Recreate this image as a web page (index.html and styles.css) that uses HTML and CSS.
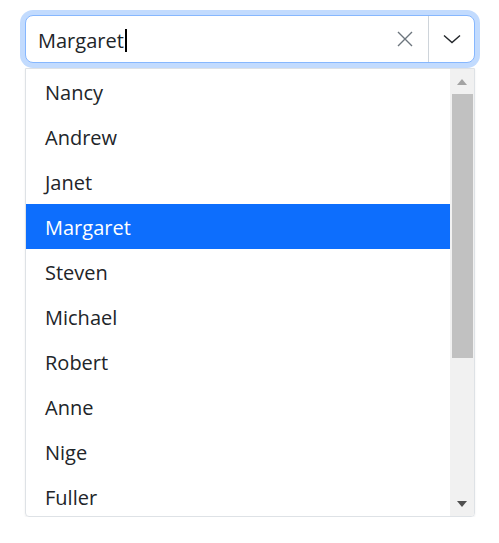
FILE: index.html
```html
<!DOCTYPE html>
<html>
<head>
<meta charset="utf-8">
<link rel="stylesheet" href="styles.css">
</head>
<body>
<div class="wrap">
  <div class="combo">
    <div class="field"><span class="value">Margaret</span><span class="caret"></span></div>
    <div class="clear">
      <svg width="16" height="16" viewBox="0 0 16 16"><path d="M1 1 L15 15 M15 1 L1 15" stroke="#6c757d" stroke-width="1.4" fill="none"/></svg>
    </div>
    <div class="toggle">
      <svg width="18" height="10" viewBox="0 0 18 10"><path d="M1 1.5 L9 8.5 L17 1.5" stroke="#212529" stroke-width="1.4" fill="none"/></svg>
    </div>
  </div>
  <div class="popup">
    <ul class="items">
      <li class="item">Nancy</li>
      <li class="item">Andrew</li>
      <li class="item">Janet</li>
      <li class="item active">Margaret</li>
      <li class="item">Steven</li>
      <li class="item">Michael</li>
      <li class="item">Robert</li>
      <li class="item">Anne</li>
      <li class="item">Nige</li>
      <li class="item">Fuller</li>
    </ul>
    <div class="scrollbar">
      <div class="sb-btn"><span class="arrow-up"></span></div>
      <div class="thumb"></div>
      <div class="sb-fill"></div>
      <div class="sb-btn"><span class="arrow-down"></span></div>
    </div>
  </div>
</div>
</body>
</html>
```
FILE: styles.css
```css
html, body {
  margin: 0;
  padding: 0;
  background: #fff;
}
body {
  font-family: "Open Sans", "Noto Sans", sans-serif;
  color: #212529;
  font-size: 20px;
}
.wrap {
  padding: 15px 24px 0 25px;
  width: 450px;
}
.combo {
  display: flex;
  height: 48px;
  box-sizing: border-box;
  border: 1px solid #86b7fe;
  border-radius: 8px;
  box-shadow: 0 0 0 5px #c2dbfe;
  background: #fff;
}
.field {
  flex: 1;
  display: flex;
  align-items: center;
  padding-left: 12px;
}
.value {
  line-height: 46px;
  padding-top: 3px;
}
.caret {
  display: inline-block;
  width: 2px;
  height: 23px;
  background: #000;
  margin-left: 1px;
  margin-top: 2px;
}
.clear {
  width: 46px;
  display: flex;
  align-items: center;
  justify-content: center;
  border-right: 1px solid #ced4da;
}
.toggle {
  width: 45px;
  display: flex;
  align-items: center;
  justify-content: center;
}
.popup {
  margin-top: 5px;
  height: 449px;
  box-sizing: border-box;
  border: 1px solid #dee2e6;
  border-radius: 0 0 4px 4px;
  box-shadow: 0 1px 2px rgba(0,0,0,0.08);
  display: flex;
  overflow: hidden;
}
.items {
  list-style: none;
  margin: 0;
  padding: 0;
  flex: 1;
  overflow: hidden;
}
.item {
  height: 45px;
  box-sizing: border-box;
  line-height: 43px;
  padding-top: 2px;
  padding-left: 19px;
}
.item.active {
  background: #0d6efd;
  color: #fff;
}
.scrollbar {
  width: 24px;
  background: #f1f1f1;
  display: flex;
  flex-direction: column;
  align-items: center;
}
.sb-btn {
  height: 25px;
  width: 100%;
  display: flex;
  align-items: center;
  justify-content: center;
}
.arrow-up {
  width: 0;
  height: 0;
  border-left: 5px solid transparent;
  border-right: 5px solid transparent;
  border-bottom: 6px solid #a3a3a3;
}
.arrow-down {
  width: 0;
  height: 0;
  border-left: 5px solid transparent;
  border-right: 5px solid transparent;
  border-top: 6px solid #505050;
}
.thumb {
  width: 21px;
  height: 264px;
  background: #c1c1c1;
}
.sb-fill {
  flex: 1;
}
```
